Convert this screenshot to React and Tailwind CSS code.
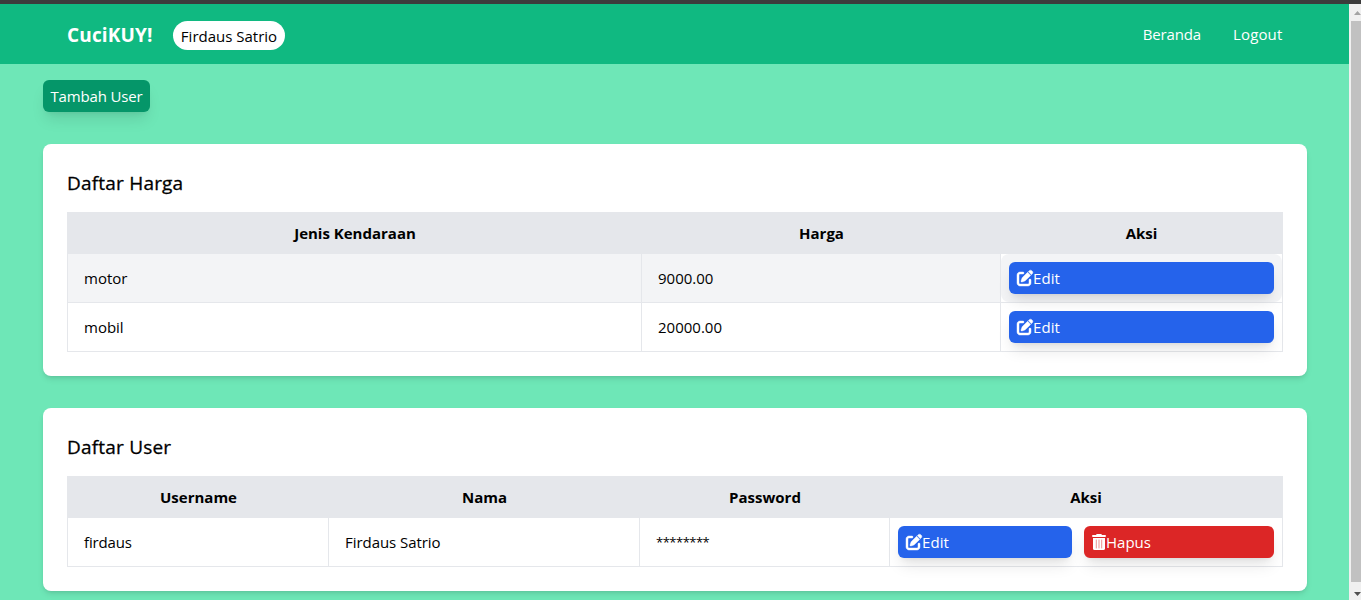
function PenToSquareIcon() {
  return (
    <svg className="size-4 shrink-0 overflow-visible" viewBox="0 0 512 512" fill="currentColor" stroke="currentColor" strokeWidth="14">
      <path d="M471.6 21.7c-21.9-21.9-57.3-21.9-79.2 0L362.3 51.7l97.9 97.9 30.1-30.1c21.9-21.9 21.9-57.3 0-79.2L471.6 21.7zm-299.2 220c-6.1 6.1-10.8 13.6-13.5 21.9l-29.6 88.8c-2.9 8.6-.6 18.1 5.8 24.6s15.9 8.7 24.6 5.8l88.8-29.6c8.2-2.7 15.7-7.4 21.9-13.5L437.7 172.3 339.7 74.3 172.4 241.7zM96 64C43 64 0 107 0 160V416c0 53 43 96 96 96H352c53 0 96-43 96-96V320c0-17.7-14.3-32-32-32s-32 14.3-32 32v96c0 17.7-14.3 32-32 32H96c-17.7 0-32-14.3-32-32V160c0-17.7 14.3-32 32-32h96c17.7 0 32-14.3 32-32s-14.3-32-32-32H96z" />
    </svg>
  );
}

function TrashCanIcon() {
  return (
    <svg className="h-4 w-3.5 shrink-0" viewBox="0 0 14 16" fill="currentColor">
      <path d="M4.2 .55A1 1 0 0 1 5.1 0H8.9A1 1 0 0 1 9.8 .55L10 1H13A1 1 0 0 1 13 3H1A1 1 0 0 1 1 1H4Z" />
      <path d="M1 4H13V14.4A1.6 1.6 0 0 1 11.4 16H2.6A1.6 1.6 0 0 1 1 14.4Z" />
      <path d="M4.3 6V14M7 6V14M9.7 6V14" stroke="#dc2626" strokeOpacity="0.5" strokeWidth="1" strokeLinecap="round" />
    </svg>
  );
}

function EditButton({ className = "" }) {
  return (
    <button className={`flex h-8 items-center rounded-md bg-[#2563eb] px-2 text-white shadow-lg ${className}`}>
      <PenToSquareIcon />
      <span className="tracking-[0.1px]">Edit</span>
    </button>
  );
}

function DeleteButton({ className = "" }) {
  return (
    <button className={`flex h-8 items-center rounded-md bg-[#dc2626] px-2 text-white shadow-lg ${className}`}>
      <TrashCanIcon />
      <span>Hapus</span>
    </button>
  );
}

function Card({ title, className = "", children }) {
  return (
    <section className={`rounded-lg bg-white p-6 shadow-md ${className}`}>
      <h2 className="mb-[15px] pt-px text-[19px] leading-7 font-medium tracking-[0.2px] [-webkit-text-stroke:0.3px_black]">
        {title}
      </h2>
      {children}
    </section>
  );
}

function HeaderRow({ columns, labels }) {
  return (
    <div className={`grid h-[41px] items-center bg-[#e5e7eb] pb-0.5 text-center font-bold ${columns}`}>
      {labels.map((label) => (
        <div key={label}>{label}</div>
      ))}
    </div>
  );
}

function Cell({ className = "", children }) {
  return <div className={`flex items-center border-r border-[#e5e7eb] px-4 ${className}`}>{children}</div>;
}

const priceColumns = "grid-cols-[574px_359px_281px]";
const userColumns = "grid-cols-[261px_311px_250px_392px]";

function Scrollbar() {
  return (
    <div className="flex w-3 shrink-0 flex-col items-end bg-[#f0f0f0]">
      <svg className="h-[17px] w-[10px]" viewBox="0 0 10 17">
        <path d="M3 11L6.5 7L10 11Z" fill="#a3a3a3" />
      </svg>
      <div className="w-[10px] flex-1 bg-[#c1c1c1]" />
      <svg className="h-[18px] w-[10px]" viewBox="0 0 10 18">
        <path d="M3 10L6.5 14L10 10Z" fill="#505050" />
      </svg>
    </div>
  );
}

export default function App() {
  return (
    <div className="flex h-[600px] w-[1361px] flex-col overflow-hidden font-['Open_Sans','Noto_Sans',sans-serif] text-[15px] leading-6 text-black">
      <div className="h-1 shrink-0 bg-[#3c3c3c]" />
      <div className="flex min-h-0 flex-1">
        <div className="min-w-0 flex-1 overflow-hidden bg-[#6ee7b7]">
          <header className="flex h-[60px] items-center justify-between bg-[#10b981] pr-[66px] pl-[67px] text-white">
            <div className="flex items-center">
              <span className="w-[106px] pt-0.5 text-[19px] font-bold tracking-[0.15px]">CuciKUY!</span>
              <span className="mt-[3px] flex h-[29px] w-28 items-center justify-center rounded-full bg-white whitespace-nowrap text-black">
                Firdaus Satrio
              </span>
            </div>
            <nav className="flex gap-8">
              <a className="tracking-[-0.15px]">Beranda</a>
              <a className="w-[50px] tracking-[0.15px]">Logout</a>
            </nav>
          </header>
          <main className="pt-4 pr-[42px] pl-[43px]">
            <button className="flex h-8 w-[107px] items-center justify-center rounded-md bg-[#059669] tracking-[-0.15px] whitespace-nowrap text-white shadow-lg">
              Tambah User
            </button>
            <Card title="Daftar Harga" className="mt-8 h-[232px]">
              <div className="border border-[#e5e7eb]">
                <HeaderRow columns={priceColumns} labels={["Jenis Kendaraan", "Harga", "Aksi"]} />
                <div className={`grid h-[49px] border-b border-[#e5e7eb] ${priceColumns}`}>
                  <Cell className="bg-[#f3f4f6]">motor</Cell>
                  <Cell className="bg-[#f3f4f6]">9000.00</Cell>
                  <div className="rounded-lg bg-[#f3f4f6] p-2">
                    <EditButton className="w-full" />
                  </div>
                </div>
                <div className={`grid h-12 ${priceColumns}`}>
                  <Cell>mobil</Cell>
                  <Cell>20000.00</Cell>
                  <div className="p-2">
                    <EditButton className="w-full" />
                  </div>
                </div>
              </div>
            </Card>
            <Card title="Daftar User" className="mt-8 h-[183px]">
              <div className="border border-[#e5e7eb]">
                <HeaderRow columns={userColumns} labels={["Username", "Nama", "Password", "Aksi"]} />
                <div className={`grid h-12 ${userColumns}`}>
                  <Cell className="tracking-[-0.15px]">firdaus</Cell>
                  <Cell className="tracking-[-0.05px]">Firdaus Satrio</Cell>
                  <Cell className="pb-px text-[13px] tracking-[-0.5px]">********</Cell>
                  <div className="flex gap-3 p-2">
                    <EditButton className="w-[174px]" />
                    <DeleteButton className="flex-1" />
                  </div>
                </div>
              </div>
            </Card>
          </main>
        </div>
        <Scrollbar />
      </div>
    </div>
  );
}
